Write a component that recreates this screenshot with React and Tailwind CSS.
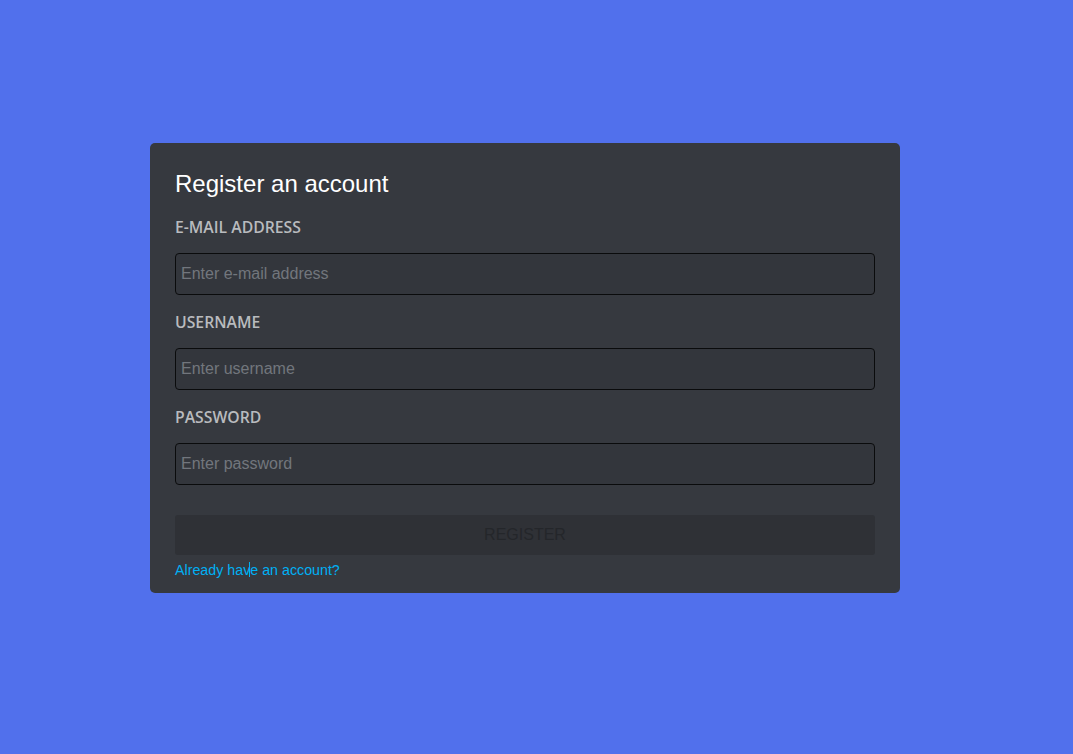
export default function App() {
  const fields = [
    { label: 'E-MAIL ADDRESS', placeholder: 'Enter e-mail address', type: 'email' },
    { label: 'USERNAME', placeholder: 'Enter username', type: 'text' },
    { label: 'PASSWORD', placeholder: 'Enter password', type: 'password' },
  ]
  return (
    <div className="min-h-screen bg-[#5170ec] pl-[150px] pt-[143px] font-['Liberation_Sans',Arial,sans-serif]">
      <div className="flex w-[750px] flex-col rounded-[5px] bg-[#36393f] px-[25px] pb-[15px] pt-[27px]">
        <h2 className="text-[24px] leading-[28px] text-white">Register an account</h2>
        <div className="mt-[2px] flex flex-col">
          {fields.map((f) => (
            <div key={f.label} className="flex flex-col">
              <label className="mt-[17px] font-['Open_Sans',sans-serif] text-[15.75px] font-semibold leading-[20px] text-[#b9bbbe]">
                {f.label}
              </label>
              <input
                type={f.type}
                placeholder={f.placeholder}
                className="mt-[16px] h-[42px] rounded-[4px] border border-[#0a0b0c] bg-[#33363c] px-[5px] text-[16px] text-[#dcddde] outline-none placeholder:text-[#72767d]"
              />
            </div>
          ))}
        </div>
        <button className="mt-[30px] h-[40px] rounded-[3px] bg-[#2f3136] text-[16px] text-[#24262a]">REGISTER</button>
        <a href="#" className="mt-[7px] text-[14.25px] leading-[16px] text-[#00b0f4]">
          Already hav<span className="relative"><span className="absolute -left-px top-[0px] h-[15px] w-px bg-[#00b0f4]" /></span>e an account?
        </a>
      </div>
    </div>
  )
}
